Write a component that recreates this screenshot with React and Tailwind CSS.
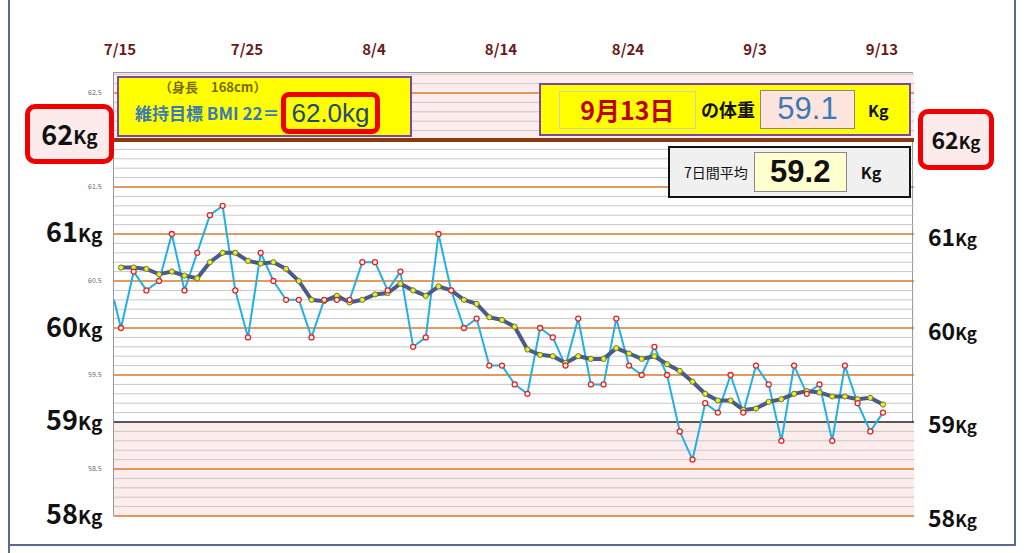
const V=[60.0,60.6,60.4,60.5,61.0,60.4,60.8,61.2,61.3,60.4,59.9,60.8,60.5,60.3,60.3,59.9,60.3,60.3,60.3,60.7,60.7,60.4,60.6,59.8,59.9,61.0,60.4,60.0,60.1,59.6,59.6,59.4,59.3,60.0,59.9,59.6,60.1,59.4,59.4,60.1,59.6,59.5,59.8,59.5,58.9,58.6,59.2,59.1,59.5,59.1,59.6,59.4,58.8,59.6,59.3,59.4,58.8,59.6,59.2,58.9,59.1];
const pre=[60.6,60.5,60.9,60.8,60.7,61.0];
const all=[...pre,...V];
const A=V.map((_,i)=>{let s=0;for(let k=0;k<7;k++)s+=all[i+6-k];return s/7;});
const X0=113;
const px=i=>120-X0+i*12.7;
const py=v=>92+(62.5-v)*94-72;
const F="'Noto Sans CJK JP','Liberation Sans',sans-serif";
const N="'Liberation Sans Narrow','Liberation Sans',sans-serif";
function Kg({n,cls}){return <div className={"absolute font-bold text-[#111] "+cls} style={{fontFamily:F}}><span className="text-[27px]">{n}</span><span className="text-[19px]">Kg</span></div>;}
export default function App(){
  const H=444,W=800;
  const lines=[];
  for(let k=0;k<=47;k++){const v=62.7-k*0.1;const y=py(v);const r=Math.round(v*10);const major=r%5===0;
    lines.push(<line key={k} x1="0" x2={W} y1={y} y2={y} stroke={r===620?"#8b3a10":r===590?"#222":major?"#d9782f":"#c8c8c8"} strokeWidth={r===620?4:major?1.5:1}/>);}
  const dates=["7/15","7/25","8/4","8/14","8/24","9/3","9/13"];
  return <div className="relative w-[1024px] h-[553px] bg-white overflow-hidden" style={{fontFamily:F}}>
    <div className="absolute left-[8px] top-0 w-[2px] h-[553px] bg-[#5a6a8a]"/>
    <div className="absolute left-[1014px] top-0 w-[2px] h-[545px] bg-[#5a6a8a]"/>
    <div className="absolute left-[8px] top-[544px] w-[1008px] h-[2px] bg-[#5a6a8a]"/>
    {dates.map((d,i)=><div key={d} className="absolute top-[38px] w-[60px] text-center text-[15px] font-bold text-[#6b1a1a]" style={{left:120+i*127-30}}>{d}</div>)}
    <div className="absolute left-[113px] top-[72px] w-[800px] h-[444px] border border-[#999]">
      <svg width={W} height={H} className="block">
        <rect x="0" y="0" width={W} height={py(62)} fill="#fdecec"/>
        <rect x="0" y={py(59)} width={W} height={H-py(59)} fill="#fdecec"/>
        {lines}
        <polyline points={"0,"+py(60.3)+" "+V.map((v,i)=>px(i)+","+py(v)).join(" ")} fill="none" stroke="#1fb0e8" strokeWidth="2"/>
        <polyline points={A.map((v,i)=>px(i)+","+py(v)).join(" ")} fill="none" stroke="#4a5a8c" strokeWidth="4"/>
        {A.map((v,i)=><circle key={"a"+i} cx={px(i)} cy={py(v)} r="2.6" fill="#e8f020" stroke="#6a7a30" strokeWidth="1"/>)}
        {V.map((v,i)=><circle key={"b"+i} cx={px(i)} cy={py(v)} r="2.5" fill="white" stroke="#e82020" strokeWidth="1.3"/>)}
      </svg>
    </div>
    {[62.5,61.5,60.5,59.5,58.5].map(v=><div key={v} className="absolute left-[88px] text-[7px] text-[#666]" style={{top:92+(62.5-v)*94-5}}>{v}</div>)}
    <div className="absolute left-[25px] top-[104px] w-[89px] h-[60px] rounded-[10px] border-[5px] border-[#f00000] bg-[#fdeaea] flex items-center justify-center font-bold text-[#111]"><span className="text-[27px]">62</span><span className="text-[19px] mt-1">Kg</span></div>
    <div className="absolute left-[918px] top-[109px] w-[76px] h-[61px] rounded-[10px] border-[5px] border-[#f00000] bg-[#fdeaea] flex items-center justify-center font-bold text-[#111]"><span className="text-[23px]">62</span><span className="text-[17px] mt-1">Kg</span></div>
    <Kg n="61" cls="left-[46px] top-[211px]"/><Kg n="60" cls="left-[46px] top-[306px]"/><Kg n="59" cls="left-[46px] top-[399px]"/><Kg n="58" cls="left-[46px] top-[493px]"/>
    <div className="absolute left-[928px] top-[219px] font-bold text-[#111]"><span className="text-[23px]">61</span><span className="text-[17px]">Kg</span></div>
    <div className="absolute left-[928px] top-[313px] font-bold text-[#111]"><span className="text-[23px]">60</span><span className="text-[17px]">Kg</span></div>
    <div className="absolute left-[928px] top-[406px] font-bold text-[#111]"><span className="text-[23px]">59</span><span className="text-[17px]">Kg</span></div>
    <div className="absolute left-[928px] top-[500px] font-bold text-[#111]"><span className="text-[23px]">58</span><span className="text-[17px]">Kg</span></div>
    <div className="absolute left-[117px] top-[76px] w-[295px] h-[61px] bg-[#ffff00] border-2 border-[#7a4aa0] flex flex-col pl-[16px]">
      <div className="text-[13px] font-bold text-[#7a6a10] pl-[24px] leading-[16px] mt-[1px]">（身長　168cm）</div>
      <div className="flex items-center gap-[2px] -mt-[3px]">
        <span className="text-[17px] font-bold text-[#3a7ab8] whitespace-nowrap">維持目標 BMI 22＝</span>
        <div className="border-[5px] border-[#f00000] rounded-[8px] px-[5px] h-[42px] flex items-center text-[26px] text-[#1f4a7a] bg-[#ffff00]" style={{fontFamily:"'Liberation Sans',sans-serif"}}>62.0kg</div>
      </div>
    </div>
    <div className="absolute left-[539px] top-[83px] w-[372px] h-[53px] bg-[#ffff00] border-2 border-[#7a4aa0] flex items-center gap-[5px] pl-[18px]">
      <div className="border border-[#ccc] w-[137px] h-[38px] flex items-center justify-center text-[25px] font-bold text-[#c00000]">9月13日</div>
      <span className="text-[18px] font-bold text-[#111]">の体重</span>
      <div className="border border-[#888] bg-[#fde4dc] w-[95px] h-[39px] flex items-center justify-center text-[31px] text-[#3a7ab8]" style={{fontFamily:N}}>59.1</div>
      <span className="text-[16px] font-bold text-[#111] ml-2">Kg</span>
    </div>
    <div className="absolute left-[668px] top-[146px] w-[243px] h-[52px] bg-[#f0f0f0] border-2 border-[#111] flex items-center gap-[6px] pl-[14px]">
      <span className="text-[14px] text-[#111]">7日間平均</span>
      <div className="border border-[#888] bg-[#ffffd0] w-[93px] h-[40px] flex items-center justify-center text-[31px] font-bold text-[#111]" style={{fontFamily:N}}>59.2</div>
      <span className="text-[16px] font-bold text-[#111] ml-2">Kg</span>
    </div>
  </div>;
}
